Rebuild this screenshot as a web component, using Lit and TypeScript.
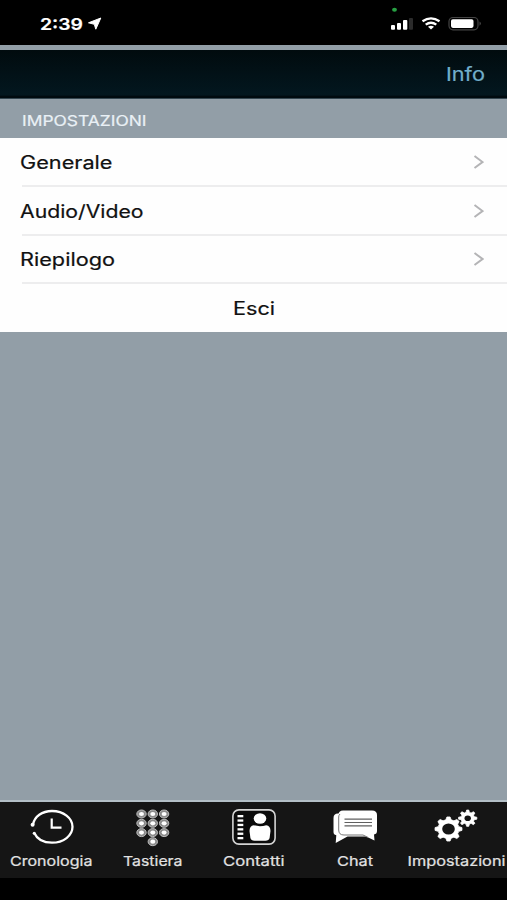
import { LitElement, html, css, svg, TemplateResult } from "lit";
import { customElement, property } from "lit/decorators.js";

/** A single line of text set to an exact width, giving the wide letterforms of the interface. */
@customElement("wide-text")
class WideText extends LitElement {
  @property() text = "";
  @property({ type: Number }) width = 50;
  @property({ type: Number }) size = 18;

  static styles = css`
    :host { display: block; flex: none; height: 24px; }
    svg { display: block; overflow: visible; }
    text { font-family: Inter, "Liberation Sans", sans-serif; fill: currentColor; stroke: currentColor; stroke-width: .2px; }
  `;

  render() {
    return html`<svg width=${this.width} height="24">
      <text x="0" y="18" font-size=${this.size} textLength=${this.width} lengthAdjust="spacingAndGlyphs">${this.text}</text>
    </svg>`;
  }
}

function gear(cx: number, cy: number, outer: number, root: number, teeth: number): string {
  const points: string[] = [];
  const step = (Math.PI * 2) / teeth;
  for (let i = 0; i < teeth; i++) {
    const a = i * step - Math.PI / 2;
    for (const [offset, r] of [[-0.32, root], [-0.15, outer], [0.15, outer], [0.32, root]]) {
      const t = a + offset * step;
      points.push(`${(cx + Math.cos(t) * r * 1.12).toFixed(2)},${(cy + Math.sin(t) * r).toFixed(2)}`);
    }
  }
  return points.join(" ");
}

const keys = [0, 1, 2].flatMap((r) => [0, 1, 2].map((c) => [5.5 + c * 11.3, 5 + r * 9.3])).concat([[16.8, 32.7]]);

const icons: Record<string, TemplateResult> = {
  history: html`<svg width="44" height="36" viewBox="0 0 44 36" fill="none" stroke="#fff">
    <path d="M3 15.500C4.500 7.500 12 2 22 2c11.500 0 20.500 7 20.500 15.800S33.500 33.700 22 33.700C13.500 33.700 7 30 4.300 24" stroke-width="2.300"/>
    <path d="M21.700 9.500V18.700H31.500" stroke-width="2.200"/>
    <circle cx="2.600" cy="15.700" r="2" fill="#fff" stroke="none"/>
    <circle cx="4.200" cy="24.300" r="1.500" fill="#fff" stroke="none"/>
  </svg>`,
  keypad: html`<svg width="34" height="38" viewBox="0 0 34 38">
    ${keys.map(([x, y]) => svg`
      <ellipse cx=${x} cy=${y} rx="4.700" ry="4" fill="#8a8a8a" stroke="#bcbcbc" stroke-width="1"/>
      <ellipse cx=${x} cy=${y} rx="2.500" ry="2.100" fill="#fff"/>`)}
  </svg>`,
  contacts: html`<svg width="44" height="36" viewBox="0 0 44 36">
    <rect x=".9" y=".9" width="42.200" height="34.200" rx="6" fill="#0b0b0b" stroke="#d4d4d4" stroke-width="1.600"/>
    ${[6, 10.4, 14.8, 19.2, 23.6, 28].map((y) => svg`<rect x="5.500" y=${y} width="5.800" height="2.300" fill="#fff"/>`)}
    <ellipse cx="28" cy="9.500" rx="6.300" ry="5.200" fill="#fff"/>
    <path d="M21.800 16.300Q28 18 34.200 16.300Q38.500 17 38.500 22L37.600 29Q36.800 31.700 33.500 31.700H22.500Q19.200 31.700 18.400 29L17.500 22Q17.500 17 21.800 16.300Z" fill="#fff"/>
  </svg>`,
  chat: html`<svg width="46" height="36" viewBox="0 0 46 36">
    <path d="M6 4.500Q1.500 4.500 1.500 9V23Q1.500 25.700 4.300 26.300L3.700 34L15.500 27.500H36V4.500Z" fill="#fff"/>
    <path d="M11 1.500H40Q45 1.500 45 6V22Q45 25 42 25.500L42.500 31.500L31 26H12Q6.500 26 6.500 21V6Q6.500 1.500 11 1.500Z" fill="#fff"/>
    <path d="M8 5Q6.700 6 6.700 8V21Q6.700 26 12 26H31L36 28.400" fill="none" stroke="#777" stroke-width="1"/>
    <path d="M12.500 10.200H40M12.500 13.500H40M12.500 16.800H40" stroke="#606060" stroke-width="1.200"/>
  </svg>`,
  settings: html`<svg width="44" height="34" viewBox="0 0 44 34">
    <g fill="#fff" stroke="#fff" stroke-width=".8" stroke-linejoin="round">
      <polygon points=${gear(14.5, 20, 12.1, 9.5, 8)}/>
      <polygon points=${gear(33.7, 9.2, 8.2, 6, 8)}/>
    </g>
    <ellipse cx="14.500" cy="20" rx="6.300" ry="5.600" fill="#151515"/>
    <ellipse cx="33.700" cy="9.200" rx="3.200" ry="2.800" fill="#151515"/>
  </svg>`,
};

const rows = [
  { text: "Generale", width: 92.5 },
  { text: "Audio/Video", width: 123.5 },
  { text: "Riepilogo", width: 95 },
];

const tabs = [
  { icon: "history", text: "Cronologia", width: 82.5 },
  { icon: "keypad", text: "Tastiera", width: 59.5 },
  { icon: "contacts", text: "Contatti", width: 61.5 },
  { icon: "chat", text: "Chat", width: 36 },
  { icon: "settings", text: "Impostazioni", width: 98 },
];

@customElement("app-root")
class AppRoot extends LitElement {
  static styles = css`
    :host { display: flex; flex-direction: column; width: 507px; height: 900px; overflow: hidden; background: #929ea7; }
    * { box-sizing: border-box; }
    svg { display: block; flex: none; }
    .status { height: 45px; background: #000; color: #fff; display: flex; justify-content: space-between; padding: 0 26px 0 40px; flex: none; }
    .clock { display: flex; gap: 5px; padding-top: 12px; }
    .clock wide-text { font-weight: 600; }
    .clock svg { margin-top: 5px; }
    .nav { height: 53.500px; flex: none; border-top: 5px solid #929ea7; background: linear-gradient(#010b0e, #03171f 94%, #000a0f 96%); display: flex; justify-content: flex-end; padding: 13px 22px 0 0; color: #72aecb; border-bottom: 1px solid #344650; }
    .section { height: 39px; flex: none; padding: 4px 0 0 22px; display: flex; align-items: center; color: #e9f0f5; }
    .list { background: #fefefe; height: 194.500px; flex: none; display: grid; grid-template-rows: 49px 49px 48.500px 1fr; }
    .row { margin-left: 22px; padding: 0 23.500px 0 0; border-bottom: 2px solid #ededee; display: flex; align-items: center; justify-content: space-between; color: #111; }
    .row wide-text { margin: 3px 0 0 -2px; }
    .row svg { margin-top: 1px; }
    .exit { display: flex; justify-content: center; align-items: center; color: #111; }
    .exit wide-text { margin-top: 1px; }
    .space { flex: 1; }
    .tabs { height: 78px; flex: none; border-top: 2px solid #b3bfc6; background: #151515; display: grid; grid-template-columns: repeat(5, 101px); color: #e2e2e2; }
    .tab { display: flex; flex-direction: column; align-items: center; min-width: 0; padding-left: 2px; }
    .icon { height: 46px; padding-top: 7px; }
    .keypad .icon { padding-top: 6.500px; }
    .settings .icon { padding-left: 1.500px; }
    .settings wide-text { transform: translateX(.5px); }
    .home { height: 22px; background: #000; flex: none; }
  `;

  render() {
    return html`
      <header class="status">
        <div class="clock">
          <wide-text text="2:39" width="43" size="16.500"></wide-text>
          <svg width="14" height="14" viewBox="0 0 14 14"><path d="M12.800 1L.5 5.800 6.300 7.300 7.800 12.200Z" fill="#fff" stroke="#fff" stroke-width="1" stroke-linejoin="round"/></svg>
        </div>
        <svg width="92" height="45" viewBox="389 0 92 45">
          <ellipse cx="394.500" cy="9.700" rx="2.400" ry="2" fill="#27a043"/>
          <g fill="#fff">
            <rect x="391" y="25" width="4" height="4.800" rx="1"/>
            <rect x="397" y="23" width="4" height="6.800" rx="1"/>
            <rect x="403" y="20" width="4.300" height="9.800" rx="1"/>
            <rect x="409" y="18" width="4" height="11.800" rx="1" fill="#2b2b2b"/>
          </g>
          <g fill="none" stroke="#fff" stroke-width="2.300">
            <path d="M422.500 21.300Q431 15.300 439.500 21.300"/>
            <path d="M425.700 24.700Q431 20.700 436.300 24.700"/>
          </g>
          <path d="M428 26.700Q431 24.900 434 26.700L431 29.500Z" fill="#fff"/>
          <rect x="449" y="17.500" width="29" height="12.300" rx="4" fill="none" stroke="#444" stroke-width="1.200"/>
          <rect x="451" y="19.200" width="22.500" height="8.700" rx="1.800" fill="#fff"/>
          <path d="M479.500 21.500Q482.500 23.600 479.500 25.700Z" fill="#444"/>
        </svg>
      </header>
      <nav class="nav"><wide-text text="Info" width="39" size="19"></wide-text></nav>
      <div class="section"><wide-text text="IMPOSTAZIONI" width="124.500" size="14.300"></wide-text></div>
      <main class="list">
        ${rows.map((r) => html`<div class="row">
          <wide-text text=${r.text} width=${r.width} size="18"></wide-text>
          <svg width="11" height="14" viewBox="0 0 11 14"><path d="M1.500 1L9.500 7L1.500 13" fill="none" stroke="#b4b4b6" stroke-width="2"/></svg>
        </div>`)}
        <div class="exit"><wide-text text="Esci" width="42" size="18"></wide-text></div>
      </main>
      <div class="space"></div>
      <footer class="tabs">
        ${tabs.map((t) => html`<div class="tab ${t.icon}">
          <div class="icon">${icons[t.icon]}</div>
          <wide-text text=${t.text} width=${t.width} size="13.500"></wide-text>
        </div>`)}
      </footer>
      <div class="home"></div>
    `;
  }
}
